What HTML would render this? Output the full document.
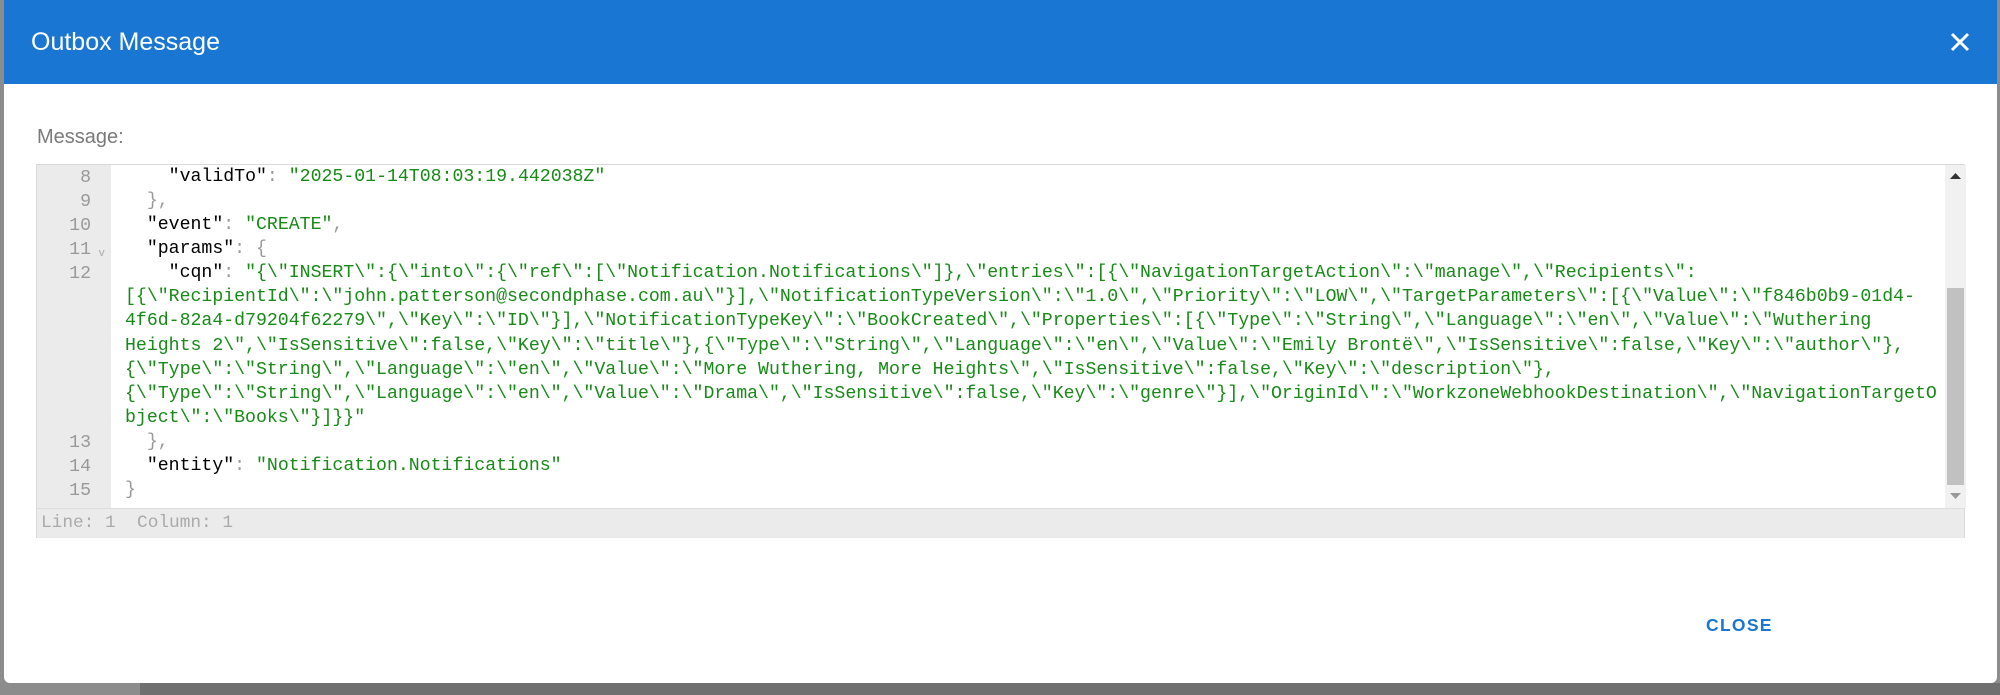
<!DOCTYPE html>
<html><head><meta charset="utf-8"><style>
*{margin:0;padding:0;box-sizing:border-box}
html,body{width:2000px;height:695px;overflow:hidden;background:#8c8c8c}
.bg2{position:absolute;left:140px;top:683px;width:1860px;height:12px;background:#6f6f6f}
.dlg{position:absolute;left:4px;top:0;width:1993px;height:683px;background:#fff;border-radius:0 0 6px 6px;overflow:hidden}
.hdr{position:absolute;left:0;top:0;width:100%;height:84px;background:#1976d2}
.title{position:absolute;left:27px;top:26px;color:#fff;font:25px "Liberation Sans",sans-serif;line-height:32px}
.x{position:absolute;left:1944px;top:30px}
.lbl{position:absolute;left:33px;top:124px;color:#7a7a7a;font:20px "Liberation Sans",sans-serif;line-height:26px}
.ed{position:absolute;left:32px;top:164px;width:1929px;height:374px;border:1px solid #d9d9d9;background:#fff}
.gut{position:absolute;left:0;top:0;width:74px;height:343px;background:#ebebeb}
.status{position:absolute;left:0;top:343px;width:100%;height:30px;background:#ebebeb;border-top:1px solid #ddd;color:#aaa;font:17.8px "Liberation Mono",monospace;line-height:29px;padding-left:4px;white-space:pre}
.ln{position:absolute;right:0;width:74px;text-align:right;padding-right:20px;color:#999;font:18.2px "Liberation Mono",monospace;line-height:24px}
.code{position:absolute;left:88px;top:0;font:18.2px "Liberation Mono",monospace;line-height:24.08px;white-space:pre;color:#000}
.s{color:#178a17}.p{color:#999}
.sb{position:absolute;left:1908px;top:0;width:21px;height:343px;background:#f1f1f1}
.th{position:absolute;left:2px;top:123px;width:17px;height:197px;background:#c1c1c1}
.close{position:absolute;left:1702px;top:615px;color:#1976d2;font:bold 17.5px "Liberation Sans",sans-serif;letter-spacing:1.3px}
</style></head><body>
<div class="bg2"></div>
<div class="dlg">
<div class="hdr"><div class="title">Outbox Message</div>
<svg class="x" width="24" height="24" viewBox="0 0 24 24"><path d="M4 4L20 20M20 4L4 20" stroke="#fff" stroke-width="3"/></svg></div>
<div class="lbl">Message:</div>
<div class="ed">
<div class="gut">
<div class="ln" style="top:1px">8</div>
<div class="ln" style="top:25px">9</div>
<div class="ln" style="top:49px">10</div>
<div class="ln" style="top:73px">11<span style="position:absolute;right:6px;top:4px;font-size:11px;color:#aaa">v</span></div>
<div class="ln" style="top:97px">12</div>
<div class="ln" style="top:266px">13</div>
<div class="ln" style="top:290px">14</div>
<div class="ln" style="top:314px">15</div>
</div>
<div class="code">    <span>"validTo"</span><span class="p">: </span><span class="s">"2025-01-14T08:03:19.442038Z"</span>
  <span class="p">},</span>
  "event"<span class="p">: </span><span class="s">"CREATE"</span><span class="p">,</span>
  "params"<span class="p">: {</span>
    "cqn"<span class="p">: </span><span class="s">"{\"INSERT\":{\"into\":{\"ref\":[\"Notification.Notifications\"]},\"entries\":[{\"NavigationTargetAction\":\"manage\",\"Recipients\":</span>
<span class="s">[{\"RecipientId\":\"john.patterson@secondphase.com.au\"}],\"NotificationTypeVersion\":\"1.0\",\"Priority\":\"LOW\",\"TargetParameters\":[{\"Value\":\"f846b0b9-01d4-</span>
<span class="s">4f6d-82a4-d79204f62279\",\"Key\":\"ID\"}],\"NotificationTypeKey\":\"BookCreated\",\"Properties\":[{\"Type\":\"String\",\"Language\":\"en\",\"Value\":\"Wuthering</span>
<span class="s">Heights 2\",\"IsSensitive\":false,\"Key\":\"title\"},{\"Type\":\"String\",\"Language\":\"en\",\"Value\":\"Emily Brontë\",\"IsSensitive\":false,\"Key\":\"author\"},</span>
<span class="s">{\"Type\":\"String\",\"Language\":\"en\",\"Value\":\"More Wuthering, More Heights\",\"IsSensitive\":false,\"Key\":\"description\"},</span>
<span class="s">{\"Type\":\"String\",\"Language\":\"en\",\"Value\":\"Drama\",\"IsSensitive\":false,\"Key\":\"genre\"}],\"OriginId\":\"WorkzoneWebhookDestination\",\"NavigationTargetO</span>
<span class="s">bject\":\"Books\"}]}}"</span>
  <span class="p">},</span>
  "entity"<span class="p">: </span><span class="s">"Notification.Notifications"</span>
<span class="p">}</span></div>
<div class="sb"><svg style="position:absolute;left:5px;top:8px" width="11" height="7"><path d="M0 6L5.5 0L11 6Z" fill="#333"/></svg><div class="th"></div><svg style="position:absolute;left:5px;top:328px" width="11" height="7"><path d="M0 0L5.5 6L11 0Z" fill="#999"/></svg></div>
<div class="status">Line: 1  Column: 1</div>
</div>
<div class="close">CLOSE</div>
</div>
</body></html>
